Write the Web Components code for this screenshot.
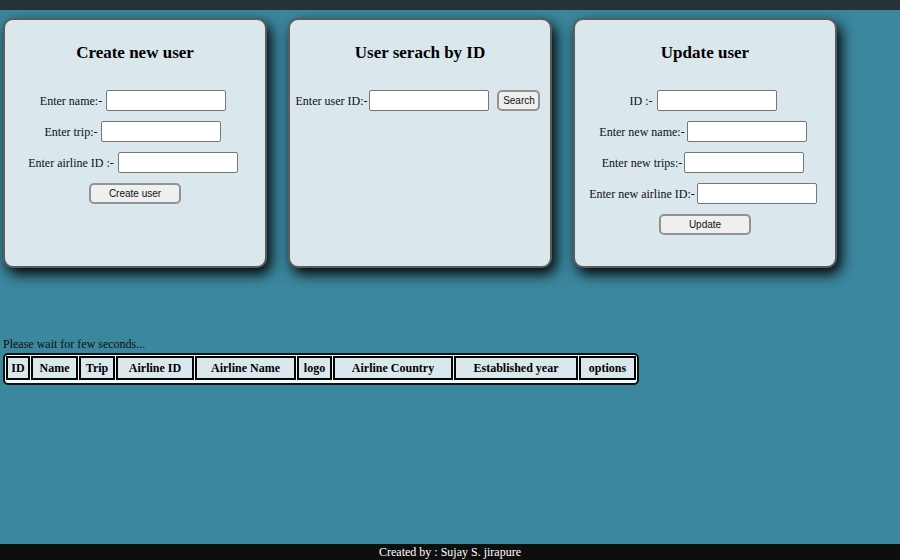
<!DOCTYPE html>
<html lang="en">
<head>
<meta charset="utf-8">
<title>Airline users</title>
<style>
body{margin:0;background:#3b879e;color:#101010;font-family:"Liberation Serif","Times New Roman",serif;font-size:12px;line-height:16px}
</style>
</head>
<body>
<app-shell>
  <user-card heading="Create new user">
    <field-row label="Enter name:-" wide></field-row>
    <field-row label="Enter trip:-" wide></field-row>
    <field-row label="Enter airline ID :-" wide></field-row>
    <action-button>Create user</action-button>
  </user-card>
  <user-card heading="User serach by ID">
    <field-row label="Enter user ID:-"><action-button compact>Search</action-button></field-row>
  </user-card>
  <user-card heading="Update user">
    <field-row label="ID :-" wide></field-row>
    <field-row label="Enter new name:-"></field-row>
    <field-row label="Enter new trips:-"></field-row>
    <field-row label="Enter new airline ID:-"></field-row>
    <action-button>Update</action-button>
  </user-card>
  <user-table slot="table"></user-table>
  <span slot="footer">Created by : Sujay S. jirapure</span>
</app-shell>
<script>
class Base extends HTMLElement {
  render(html) { this.attachShadow({mode: 'open'}).innerHTML = html; }
}
customElements.define('app-shell', class extends Base {
  connectedCallback() {
    this.render(`<style>
      :host{display:flex;flex-direction:column;min-height:100vh}
      header{height:10px;background:#25323a;flex:none}
      main{flex:1;padding:8px 3px}
      .cards{display:grid;grid-template-columns:repeat(3,minmax(0,1fr));gap:21px;max-width:834px}
      .list{margin-top:68px}
      footer{background:#0e0e0e;color:#fff;text-align:center;flex:none}
    </style>
    <header></header>
    <main><div class="cards"><slot></slot></div><div class="list"><slot name="table"></slot></div></main>
    <footer><slot name="footer"></slot></footer>`);
  }
});
customElements.define('user-card', class extends Base {
  connectedCallback() {
    this.render(`<style>
      :host{display:flex;flex-direction:column;align-items:center;gap:10px;box-sizing:border-box;min-height:250px;
        padding:20px 4px;border:2px solid #5c5c5c;border-radius:10px;background:#dae7ec;box-shadow:4px 6px 14px #000}
      h2{margin:0 0 14px;font-size:17px;line-height:26px;font-weight:bold;color:#000}
    </style><h2>${this.getAttribute('heading')}</h2><slot></slot>`);
  }
});
customElements.define('field-row', class extends Base {
  connectedCallback() {
    this.render(`<style>
      :host{display:flex;align-items:center;justify-content:center;gap:2px;padding-right:4px;white-space:nowrap}
      :host([wide]){gap:4px}
      input{box-sizing:border-box;width:120px;height:21px;margin:0;padding:1px 2px;border:1px solid #767676;border-radius:2px;background:#fff;font:12px "Liberation Sans",Arial,sans-serif}
      ::slotted(*){margin-left:6px}
    </style><label for="f">${this.getAttribute('label')}</label><input id="f" type="text"><slot></slot>`);
  }
});
customElements.define('action-button', class extends Base {
  connectedCallback() {
    this.render(`<style>
      :host{display:block}
      button{display:block;box-sizing:border-box;width:92px;height:21px;margin:0;padding:0;border:2px solid #929292;border-radius:5px;background:#efefef;color:#111;font:10px "Liberation Sans",Arial,sans-serif}
      :host([compact]) button{width:43px}
    </style><button type="button"><slot></slot></button>`);
  }
});
customElements.define('user-table', class extends Base {
  connectedCallback() {
    const columns = [['ID',24],['Name',47],['Trip',36],['Airline ID',78],['Airline Name',101],['logo',35],['Airline Country',120],['Established year',124],['options',57]];
    this.render(`<style>
      :host{display:block}
      p{margin:0 0 1px}
      table{border:2px solid #0c1114;border-radius:5px;border-collapse:separate;border-spacing:1px;padding-bottom:2px;background:#f2fafa}
      th{box-sizing:border-box;height:24px;padding:0;border:2px solid #050505;background:#dae7ec;color:#000;white-space:nowrap}
    </style><p>Please wait for few seconds...</p>
    <table><thead><tr>${columns.map(([t,w]) => `<th scope="col" style="width:${w}px">${t}</th>`).join('')}</tr></thead></table>`);
  }
});
</script>
</body>
</html>
